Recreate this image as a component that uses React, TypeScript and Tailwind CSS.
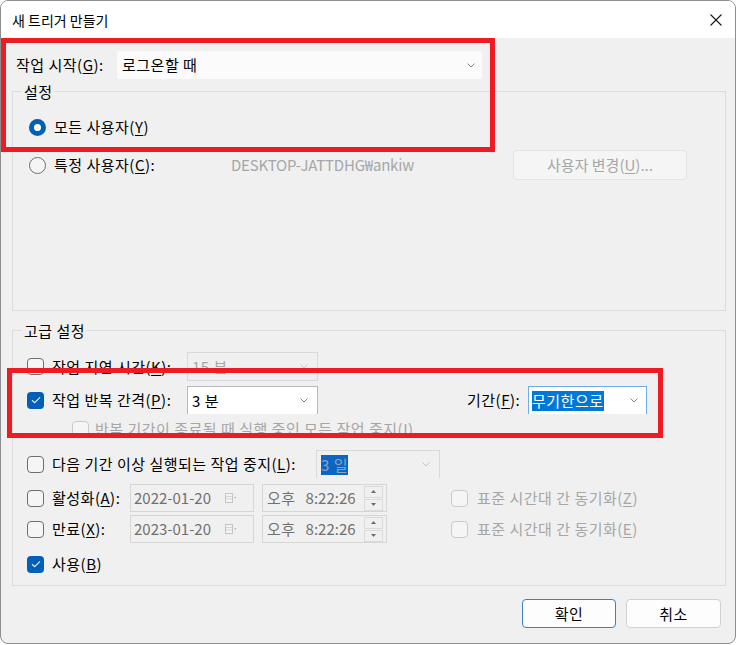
import React from 'react'
import clsx from 'clsx'

// mnemonic letter, underlined like the Win32 accelerator keys
const U = ({ children }: { children: React.ReactNode }) => (
  <span className="underline decoration-1 underline-offset-2">{children}</span>
)

function Chevron({ color = '#8a8a8a' }: { color?: string }) {
  return (
    <svg width="8" height="5" viewBox="0 0 8 5" className="shrink-0">
      <path d="M0.5 0.5 L4 4 L7.5 0.5" fill="none" stroke={color} strokeWidth="1" />
    </svg>
  )
}

function Check({ checked, disabled }: { checked?: boolean; disabled?: boolean }) {
  if (checked)
    return (
      <span className="flex h-[17px] w-[17px] shrink-0 items-center justify-center rounded-[4px] bg-[#005fb8]">
        <svg width="10" height="8" viewBox="0 0 10 8">
          <path d="M1 4.2 L3.7 6.7 L9 1.3" fill="none" stroke="#dfe9f6" strokeWidth="1.2" />
        </svg>
      </span>
    )
  return (
    <span
      className={clsx(
        'h-[17px] w-[17px] shrink-0 rounded-[4px] border bg-[#f5f5f5]',
        disabled ? 'border-[#cacaca]' : 'border-[#6e6e6e]'
      )}
    />
  )
}

function Radio({ checked }: { checked?: boolean }) {
  if (checked)
    return (
      <span className="flex h-[17px] w-[17px] shrink-0 items-center justify-center rounded-full bg-[#005fb8]">
        <span className="h-[7px] w-[7px] rounded-full bg-white" />
      </span>
    )
  return <span className="h-[17px] w-[17px] shrink-0 rounded-full border border-[#6e6e6e] bg-[#f5f5f5]" />
}

function DatePicker({ value }: { value: string }) {
  return (
    <div className="flex h-[28px] w-[124px] shrink-0 items-center justify-between border border-[#d6d6d6] pl-[3px] pr-[16px] tracking-normal text-[#707070]">
      <span>{value}</span>
      <svg width="12" height="10" viewBox="0 0 12 10">
        <rect x="0.5" y="0.5" width="7" height="9" fill="#f4f4f4" stroke="#c4c4c4" />
        <path d="M1 3.5 H7 M1 6 H7" stroke="#d6d6d6" />
        <path d="M9 4 L11.5 4 L10.25 5.5 Z" fill="#b0b0b0" />
      </svg>
    </div>
  )
}

function TimePicker() {
  return (
    <div className="flex h-[28px] w-[125px] shrink-0 items-center border border-[#d6d6d6] pl-[4px] pr-[3px] text-[#707070]">
      <span>오후</span>
      <span className="ml-[10px] tracking-normal">8:22:26</span>
      <div className="ml-auto flex flex-col gap-[1px]">
        <span className="flex h-[12px] w-[19px] items-center justify-center border border-[#dadada]">
          <svg width="5" height="3" viewBox="0 0 5 3"><path d="M0 3 L2.5 0 L5 3 Z" fill="#6a6a6a" /></svg>
        </span>
        <span className="flex h-[12px] w-[19px] items-center justify-center border border-[#dadada]">
          <svg width="5" height="3" viewBox="0 0 5 3"><path d="M0 0 L2.5 3 L5 0 Z" fill="#6a6a6a" /></svg>
        </span>
      </div>
    </div>
  )
}

export default function App() {
  return (
    <div className="relative h-[645px] w-[736px] bg-white font-['Noto_Sans_CJK_KR','Noto_Sans',sans-serif] text-[15px] leading-[20px] tracking-[0.5px] text-black">
      <div className="flex h-[644px] w-[736px] flex-col overflow-hidden rounded-[8px] border border-[#8e8e8e] bg-[#f0f0f0]">
        {/* title bar */}
        <div className="flex h-[37px] shrink-0 items-center justify-between bg-white pl-[11px] pr-[13px]">
          <span className="text-[14px] tracking-normal">새 트리거 만들기</span>
          <svg width="12" height="12" viewBox="0 0 12 12">
            <path d="M0.5 0.5 L11.5 11.5 M11.5 0.5 L0.5 11.5" stroke="#1a1a1a" strokeWidth="1.1" />
          </svg>
        </div>

        <div className="flex flex-1 flex-col pl-[11px] pr-[9px]">
          {/* 작업 시작 */}
          <div className="mt-[13px] flex h-[28px] items-center">
            <span className="w-[105px] shrink-0 pl-[4px]">
              작업 시작(<U>G</U>):
            </span>
            <div className="flex h-[28px] w-[365px] items-center justify-between rounded-[2px] bg-[#fbfbfb] pl-[5px] pr-[7px]">
              <span>로그온할 때</span>
              <Chevron />
            </div>
          </div>

          {/* 설정 */}
          <div className="relative mt-[12px] h-[220px] border border-[#dcdcdc] pl-[16px] pt-[23px]">
            <span className="absolute left-[9px] top-[-10px] bg-[#f0f0f0] px-[2px]">설정</span>
            <div className="flex h-[24px] items-center gap-[8px]">
              <Radio checked />
              <span>
                모든 사용자(<U>Y</U>)
              </span>
            </div>
            <div className="mt-[11px] flex h-[30px] items-center">
              <Radio />
              <span className="ml-[8px] w-[177px] shrink-0">
                특정 사용자(<U>C</U>):
              </span>
              <span className="w-[282px] shrink-0 tracking-[-0.2px] text-[#a6a6a6]">DESKTOP-JATTDHG₩ankiw</span>
              <div className="flex h-[30px] w-[174px] items-center justify-center rounded-[4px] border border-[#e3e3e3] bg-[#f5f5f5] tracking-normal text-[#a6a6a6]">
                사용자 변경(<U>U</U>)...
              </div>
            </div>
          </div>

          {/* 고급 설정 */}
          <div className="relative mt-[19px] h-[256px] border border-[#dcdcdc] pl-[14px]">
            <span className="absolute left-[9px] top-[-10px] bg-[#f0f0f0] px-[2px]">고급 설정</span>

            <div className="mt-[21px] flex h-[29px] items-center">
              <Check />
              <span className="ml-[8px] w-[135px] shrink-0">
                작업 지연 시간(<U>K</U>):
              </span>
              <div className="flex h-[29px] w-[131px] items-center justify-between border border-[#d9d9d9] pl-[4px] pr-[9px] text-[#a6a6a6]">
                <span>15 분</span>
                <Chevron color="#c4c4c4" />
              </div>
            </div>

            <div className="mt-[5px] flex h-[28px] items-center">
              <Check checked />
              <span className="ml-[8px] w-[135px] shrink-0">
                작업 반복 간격(<U>P</U>):
              </span>
              <div className="flex h-[28px] w-[131px] items-center justify-between border border-b-0 border-[#b9b9b9] bg-white pl-[4px] pr-[9px]">
                <span>3 분</span>
                <Chevron />
              </div>
              <span className="ml-[149px] w-[61px] shrink-0">
                기간(<U>F</U>):
              </span>
              <div className="flex h-[28px] w-[119px] items-center justify-between border border-b-0 border-[#6eaee6] bg-white pl-[3px] pr-[8px]">
                <span className="bg-[#0078d7] text-white">무기한으로</span>
                <Chevron />
              </div>
            </div>

            <div className="mt-[1px] flex h-[28px] items-center pl-[45px]">
              <Check disabled />
              <span className="ml-[6px] text-[#a6a6a6]">
                반복 기간이 종료될 때 실행 중인 모든 작업 중지(<U>I</U>)
              </span>
            </div>

            <div className="mt-[7px] flex h-[28px] items-center">
              <Check />
              <span className="ml-[8px] w-[264px] shrink-0">
                다음 기간 이상 실행되는 작업 중지(<U>L</U>):
              </span>
              <div className="flex h-[28px] w-[124px] items-center justify-between border border-b-0 border-[#d9d9d9] pl-[4px] pr-[9px]">
                <span className="bg-[#0a66c2] text-[#8ea3bd]">3 일</span>
                <Chevron color="#c4c4c4" />
              </div>
            </div>

            <div className="mt-[6px] flex h-[28px] items-center">
              <Check />
              <span className="ml-[8px] w-[78px] shrink-0">
                활성화(<U>A</U>):
              </span>
              <DatePicker value="2022-01-20" />
              <div className="ml-[8px]">
                <TimePicker />
              </div>
              <div className="ml-[64px] flex items-center gap-[9px] text-[#a6a6a6]">
                <Check disabled />
                <span>
                  표준 시간대 간 동기화(<U>Z</U>)
                </span>
              </div>
            </div>

            <div className="mt-[3px] flex h-[28px] items-center">
              <Check />
              <span className="ml-[8px] w-[78px] shrink-0">
                만료(<U>X</U>):
              </span>
              <DatePicker value="2023-01-20" />
              <div className="ml-[8px]">
                <TimePicker />
              </div>
              <div className="ml-[64px] flex items-center gap-[9px] text-[#a6a6a6]">
                <Check disabled />
                <span>
                  표준 시간대 간 동기화(<U>E</U>)
                </span>
              </div>
            </div>

            <div className="mt-[7px] flex h-[28px] items-center gap-[8px]">
              <Check checked />
              <span>
                사용(<U>B</U>)
              </span>
            </div>
          </div>

          {/* buttons */}
          <div className="mt-[13px] flex justify-end gap-[10px] pr-[5px]">
            <button className="flex h-[29px] w-[94px] items-center justify-center rounded-[4px] border border-[#3c7fc4] bg-[#fdfdfd]">
              확인
            </button>
            <button className="flex h-[29px] w-[95px] items-center justify-center rounded-[4px] border border-[#d0d0d0] bg-[#fdfdfd]">
              취소
            </button>
          </div>
        </div>
      </div>

      {/* red annotation boxes drawn over the dialog */}
      <div className="absolute left-[1px] top-[38px] h-[114px] w-[494px] border-[5px] border-[#ed1c24]" />
      <div className="absolute left-[7px] top-[368px] h-[70px] w-[656px] border-[5px] border-[#ed1c24]" />
    </div>
  )
}
